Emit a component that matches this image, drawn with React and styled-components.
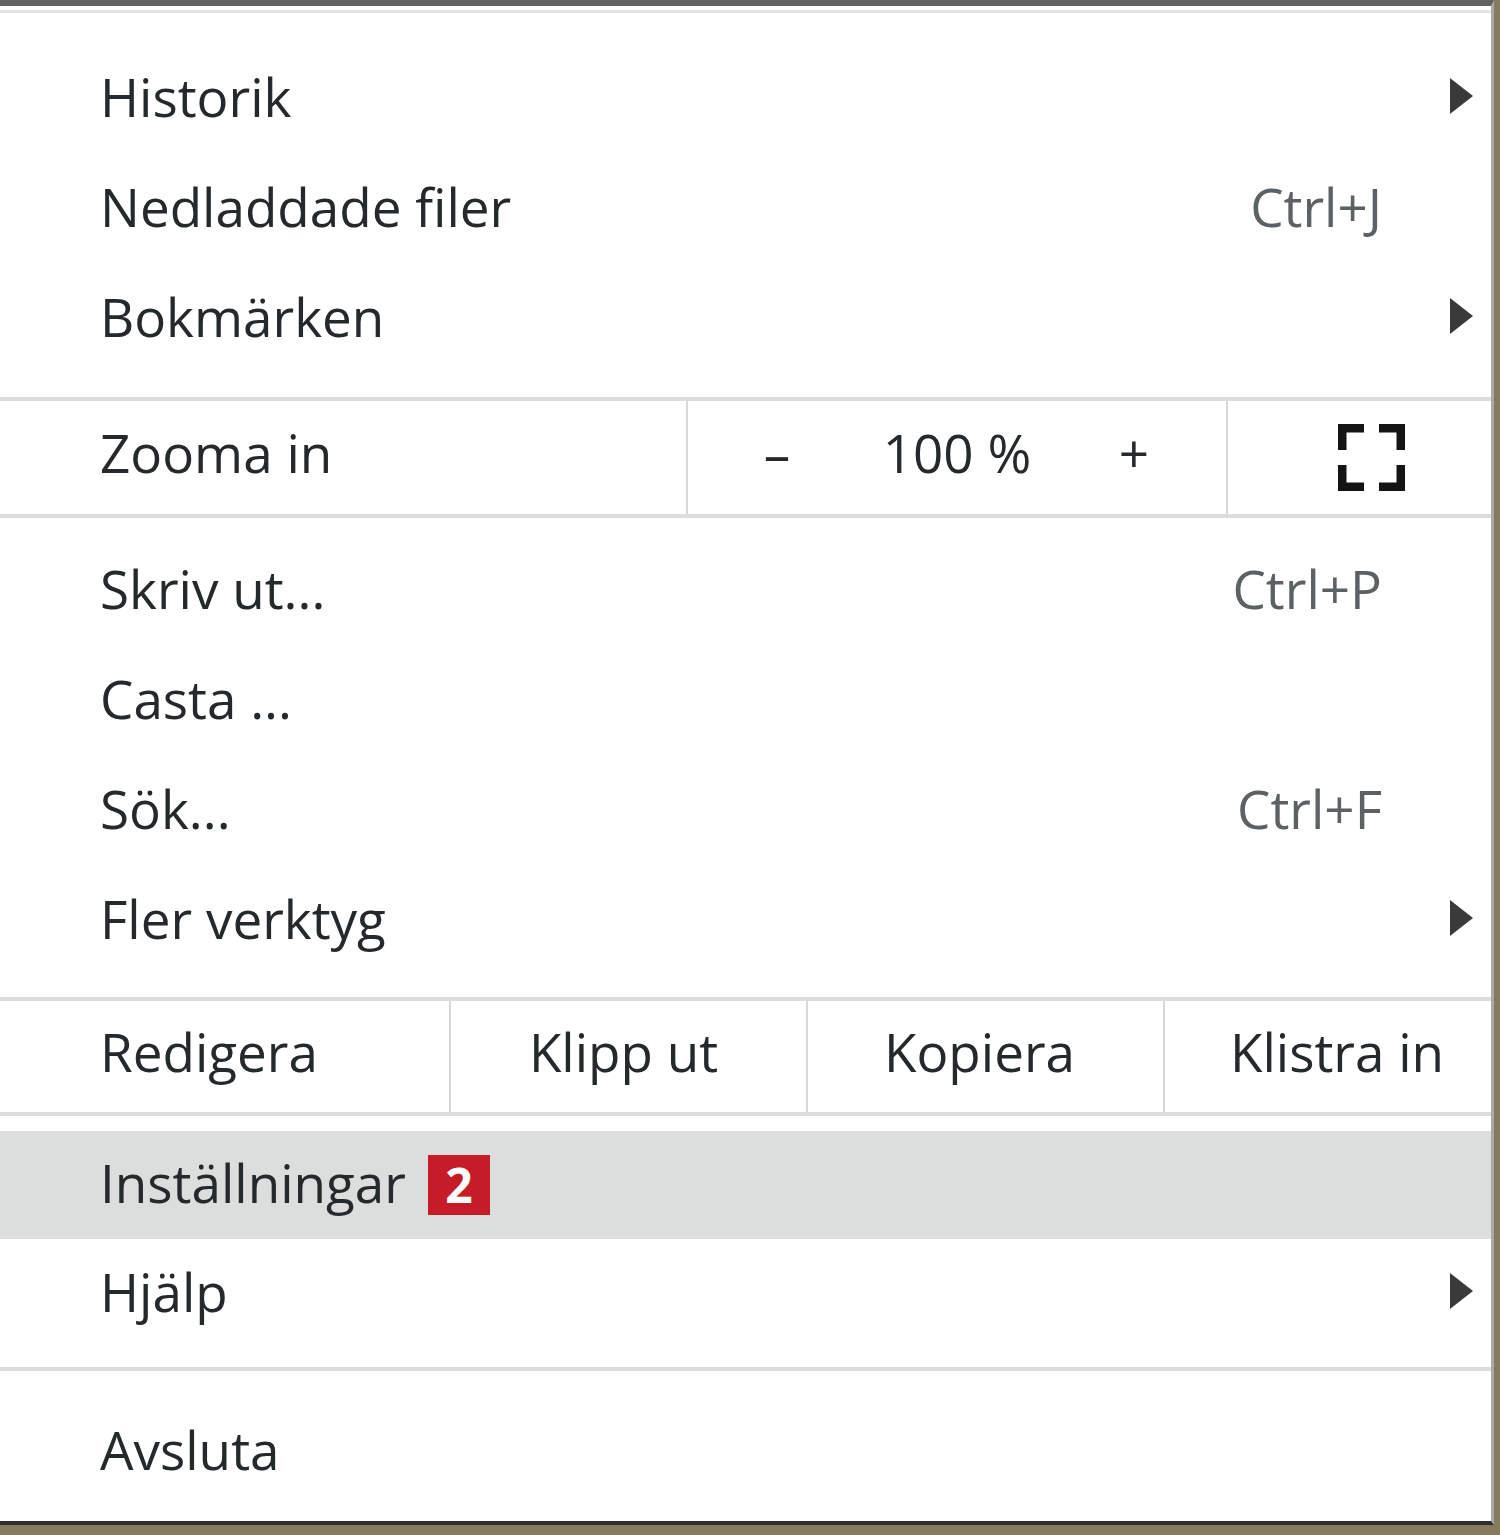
import React from 'react';
import styled, { createGlobalStyle, css } from 'styled-components';

/* sidan: ingen marginal, olivfärgat skrivbord under menyn */
const Global = createGlobalStyle`
  *, *::before, *::after { box-sizing: border-box; }
  html, body { margin: 0; padding: 0; background: #857a5b; }
  body { font-family: "Open Sans", "Noto Sans", sans-serif; }
`;

const Menu = styled.div`
  width: 1494px;
  height: 1525px;
  background: #fff;
  border-top: 6px solid #626262;
  border-right: 3px solid #a9a9a9;
  border-bottom: 4px solid #2e2e2e;
  display: flex;
  flex-direction: column;
  overflow: hidden;
`;

const TopLine = styled.div`
  height: 3px;
  margin-top: 4px;
  background: #e4e4e4;
  margin-bottom: 31px;
`;

const Item = styled.div`
  display: flex;
  align-items: center;
  height: 110px;
  flex-shrink: 0;
  padding: 0 18px 5px 100px;
  font-size: 53px;
  color: #24292c;
  ${p => p.active && css`
    background: #dcdedd;
    height: 108px;
  `}
`;

const Label = styled.span`
  flex: 1;
  display: flex;
  align-items: center;
  gap: 22px;
`;

const Shortcut = styled.span`
  color: #5c6264;
  margin-right: 91px;
`;

const Arrow = styled.span`
  width: 0;
  height: 0;
  border-top: 18px solid transparent;
  border-bottom: 18px solid transparent;
  border-left: 23px solid #3a3a3a;
  margin-top: -2px;
`;

const Separator = styled.div`
  height: 4px;
  flex-shrink: 0;
  background: #dcdcdc;
  margin-top: ${p => p.top || 0}px;
  margin-bottom: ${p => p.bottom || 0}px;
`;

const ZoomRow = styled.div`
  display: grid;
  grid-template-columns: 686px 540px 1fr;
  height: 113px;
  flex-shrink: 0;
  font-size: 53px;
  color: #24292c;
`;

const EditRow = styled.div`
  display: grid;
  grid-template-columns: 449px 357px 357px 1fr;
  height: 111px;
  flex-shrink: 0;
  font-size: 53px;
  color: #24292c;
`;

const Cell = styled.div`
  display: flex;
  align-items: center;
  justify-content: ${p => (p.center ? 'center' : 'flex-start')};
  padding-left: ${p => (p.center ? p.shift || 0 : 100)}px;
  padding-right: ${p => (p.center ? p.pull || 0 : 0)}px;
  padding-bottom: ${p => (p.icon ? 0 : 10)}px;
  border-left: ${p => (p.divider ? '2px solid #d6d6d6' : 'none')};
`;

const Controls = styled.div`
  display: flex;
  align-items: center;
  border-left: 2px solid #d6d6d6;
  padding-bottom: 10px;
`;

const Step = styled.span`
  width: ${p => p.w}px;
  text-align: center;
  color: #24292c;
`;

const Badge = styled.span`
  display: inline-flex;
  align-items: center;
  justify-content: center;
  width: 62px;
  height: 60px;
  background: #c61c27;
  color: #fff;
  font-weight: 700;
  font-size: 48px;
  line-height: 1;
  margin-top: 4px;
`;

const FullscreenIcon = () => (
  <svg width="67" height="67" viewBox="0 0 67 67">
    <path
      d="M4 26 V4 H26 M41 4 H63 V26 M63 41 V63 H41 M26 63 H4 V41"
      fill="none"
      stroke="#141414"
      strokeWidth="9"
    />
  </svg>
);

const items1 = [
  { label: 'Historik', sub: true },
  { label: 'Nedladdade filer', key: 'Ctrl+J' },
  { label: 'Bokmärken', sub: true },
];

const items2 = [
  { label: 'Skriv ut...', key: 'Ctrl+P' },
  { label: 'Casta ...' },
  { label: 'Sök...', key: 'Ctrl+F' },
  { label: 'Fler verktyg', sub: true },
];

const Row = ({ label, shortcut, sub, active, children }) => (
  <Item active={active}>
    <Label>{label}{children}</Label>
    {shortcut && <Shortcut>{shortcut}</Shortcut>}
    {sub && <Arrow />}
  </Item>
);

const App = () => (
  <>
    <Global />
    <Menu>
      <TopLine />
      {items1.map(i => <Row key={i.label} label={i.label} shortcut={i.key} sub={i.sub} />)}
      <Separator top={23} />
      <ZoomRow>
        <Cell>Zooma in</Cell>
        <Controls>
          <Step w={178}>–</Step>
          <Step w={182}>100 %</Step>
          <Step w={172}>+</Step>
        </Controls>
        <Cell center divider icon shift={24}><FullscreenIcon /></Cell>
      </ZoomRow>
      <Separator bottom={18} />
      {items2.map(i => <Row key={i.label} label={i.label} shortcut={i.key} sub={i.sub} />)}
      <Separator top={21} />
      <EditRow>
        <Cell>Redigera</Cell>
        <Cell center divider pull={10}>Klipp ut</Cell>
        <Cell center divider pull={12}>Kopiera</Cell>
        <Cell center divider shift={18}>Klistra in</Cell>
      </EditRow>
      <Separator bottom={15} />
      <Row label="Inställningar" active><Badge>2</Badge></Row>
      <Row label="Hjälp" sub />
      <Separator top={18} bottom={26} />
      <Row label="Avsluta" />
    </Menu>
  </>
);

export default App;
